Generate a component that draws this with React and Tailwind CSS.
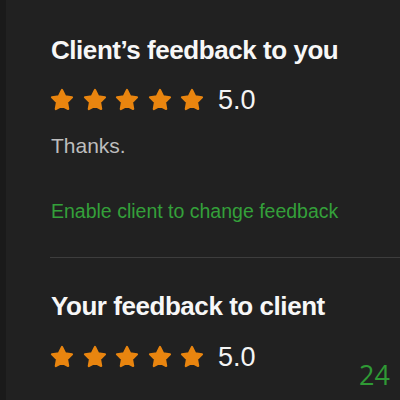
const STAR_POINTS =
  "12,2 15.09,8.26 22,9.27 17,14.14 18.18,21.02 12,17.77 5.82,21.02 7,14.14 2,9.27 8.91,8.26";

const Star = () => (
  <svg width="24" height="24" viewBox="0 0 24 24" className="shrink-0">
    <polygon
      points={STAR_POINTS}
      fill="#e9850f"
      stroke="#e9850f"
      strokeWidth="2.2"
      strokeLinejoin="round"
    />
  </svg>
);

const Rating = ({ score }) => (
  <div className="flex items-center h-[32px] -ml-[1px]">
    <div className="flex items-center gap-[8.5px]">
      {[0, 1, 2, 3, 4].map((i) => (
        <Star key={i} />
      ))}
    </div>
    <span className="ml-[14px] text-[27px] leading-[32px] text-[#f4f4f4]">
      {score}
    </span>
  </div>
);

const Heading = ({ children }) => (
  <h2 className="text-[26px] leading-[32px] font-bold tracking-[-0.45px] text-[#f7f7f7]">
    {children}
  </h2>
);

const App = () => {
  return (
    <div
      className="relative flex h-[400px] w-full overflow-hidden bg-[#212121]"
      style={{ fontFamily: '"Liberation Sans", Arial, sans-serif' }}
    >
      <div className="w-[6px] shrink-0 bg-[#1a1a1a]" />

      <div className="flex-1 pt-[34px]">
        <div className="pl-[45px]">
          <Heading>Client’s feedback to you</Heading>
          <div className="mt-[17.5px]">
            <Rating score="5.0" />
          </div>
          <p className="mt-[18px] text-[21px] leading-[24px] text-[#bdbdbd]">
            Thanks.
          </p>
          <button className="mt-[41px] block text-[19.5px] leading-[24px] text-[#34a03a]">
            Enable client to change feedback
          </button>
        </div>

        <div className="ml-[44px] mt-[34px] h-[1.5px] bg-[#3d3d3d]" />

        <div className="pl-[45px] pt-[32px]">
          <Heading>Your feedback to client</Heading>
          <div className="mt-[18.5px]">
            <Rating score="5.0" />
          </div>
        </div>
      </div>

      {/* page counter */}
      <span
        className="absolute right-[10px] top-[361px] text-[27px] leading-[28px] font-normal text-[#2f9a35]"
        style={{ fontFamily: '"Open Sans", sans-serif' }}
      >
        24
      </span>
    </div>
  );
};

export default App;
